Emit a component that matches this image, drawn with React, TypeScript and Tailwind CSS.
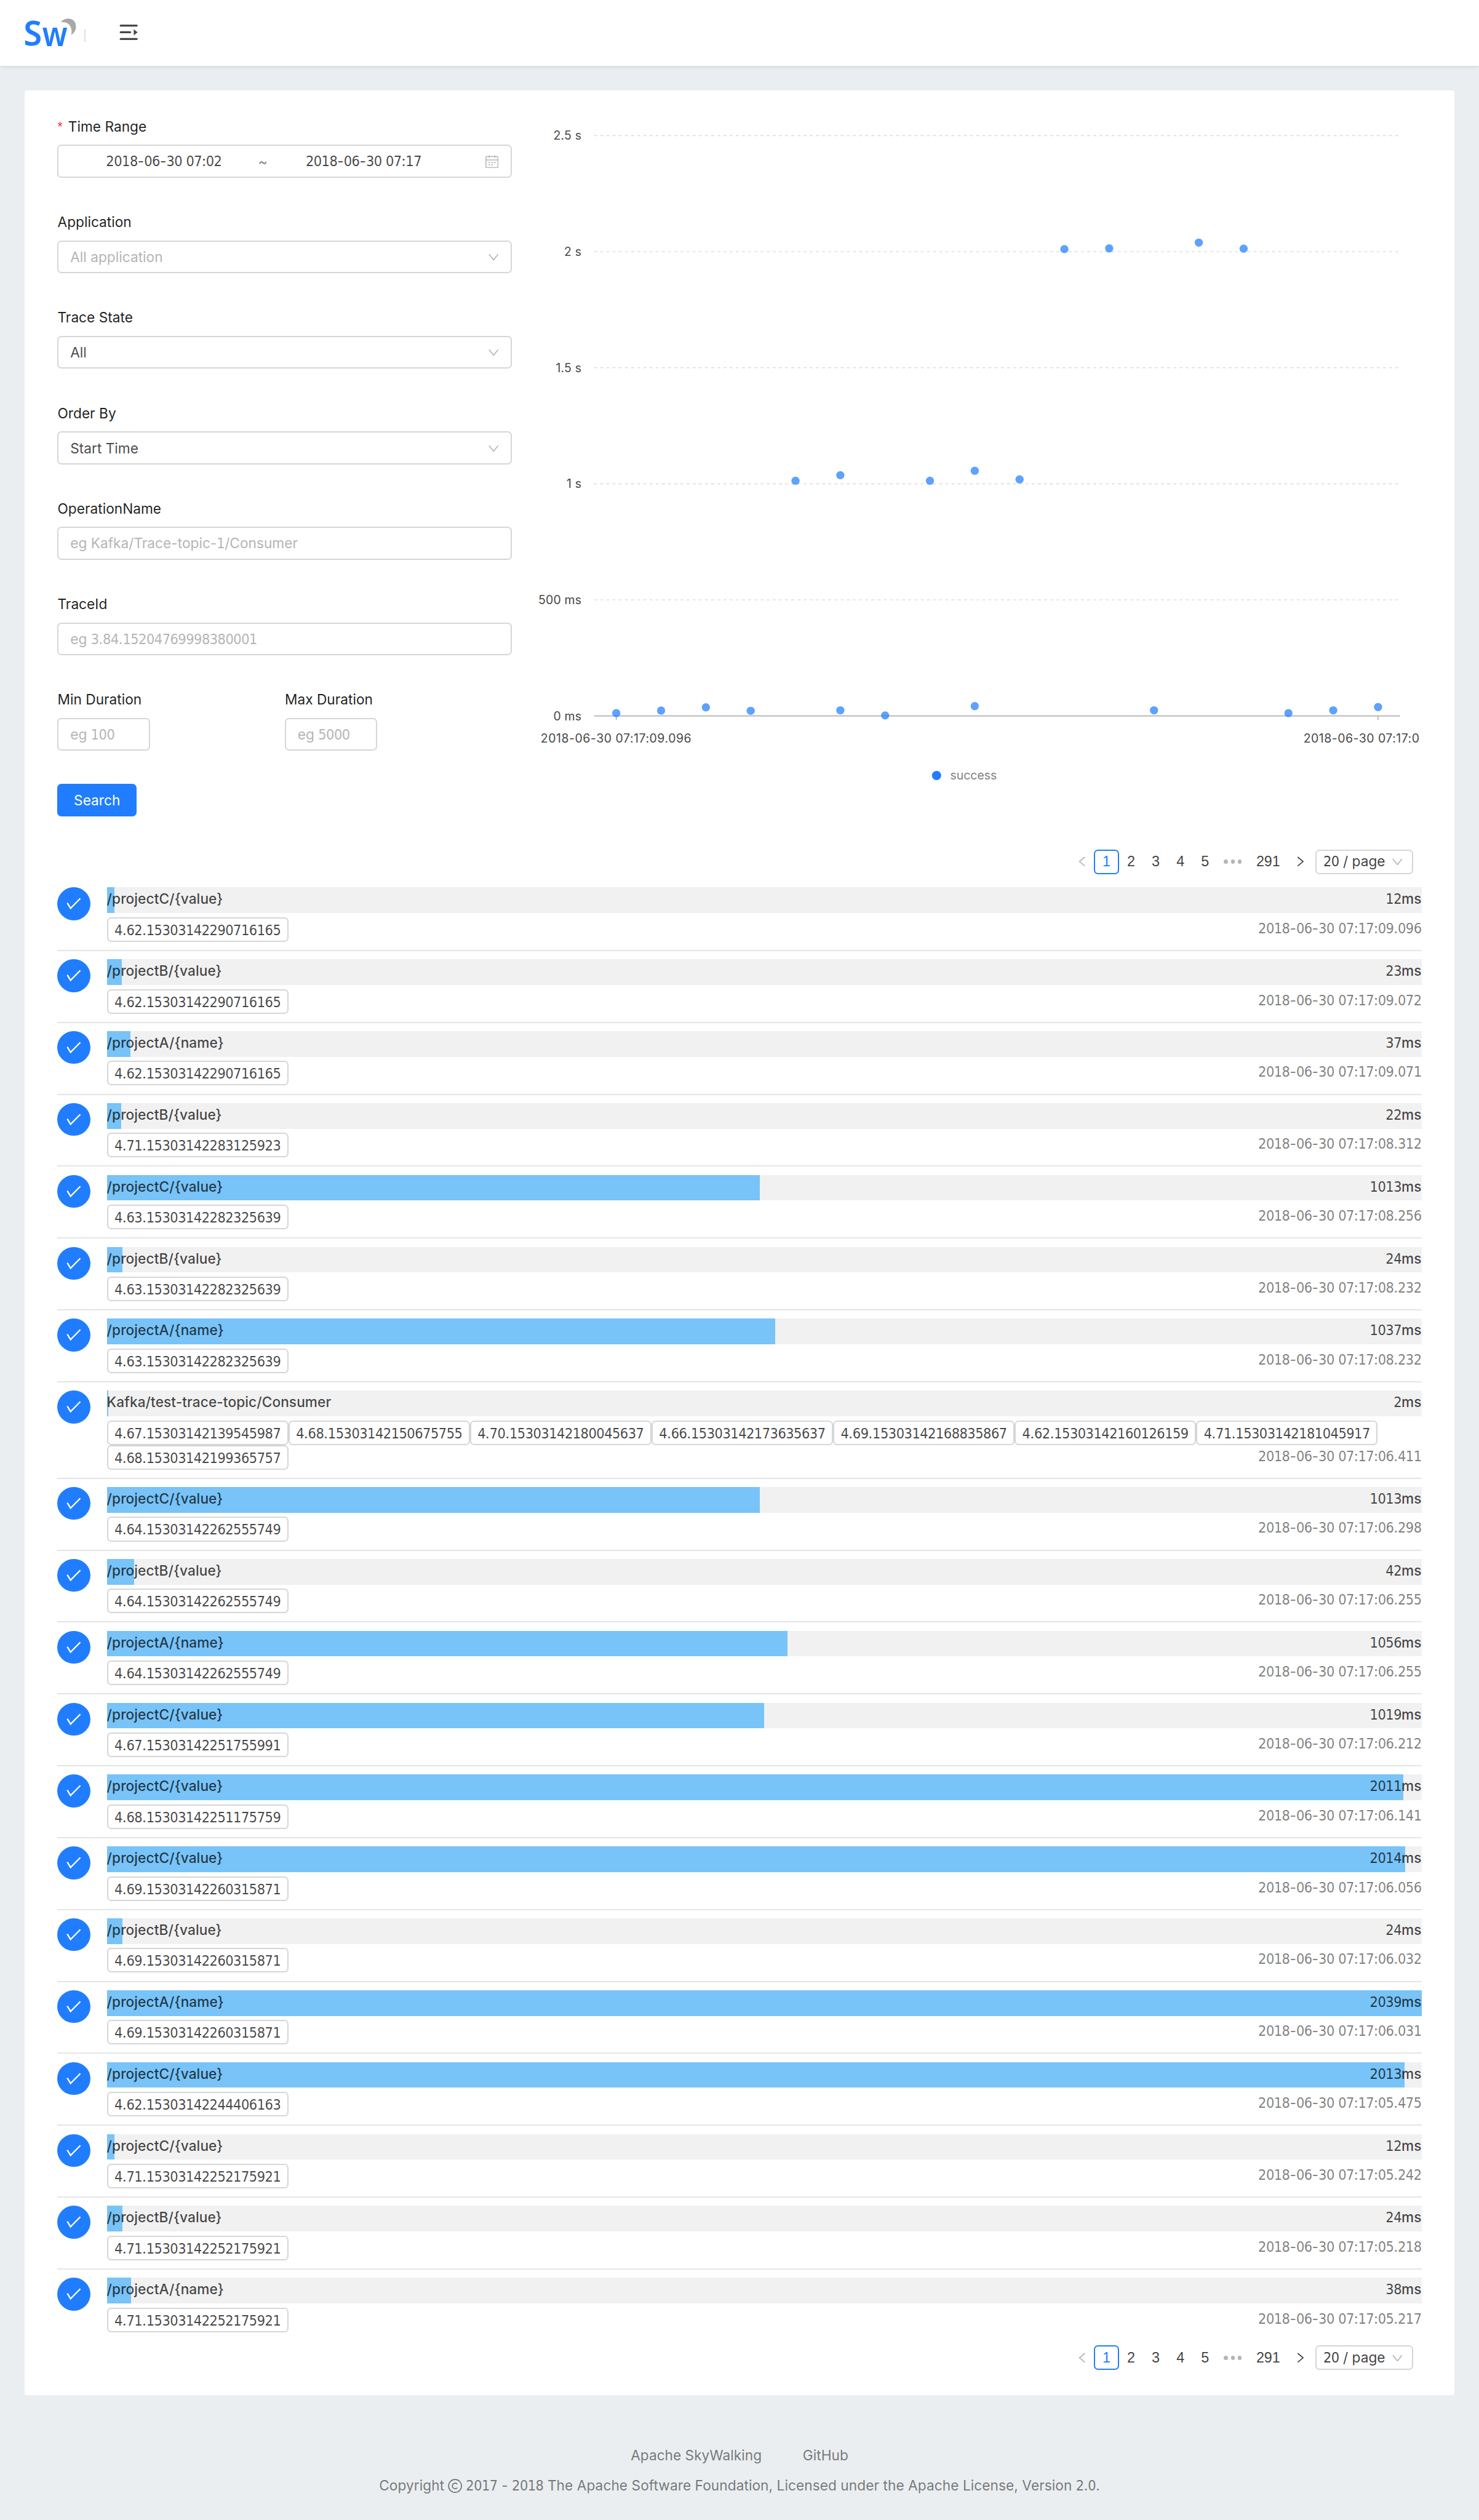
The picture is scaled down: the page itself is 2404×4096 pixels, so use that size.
import { Fragment, type ReactNode } from "react";

type Trace = { name: string; ms: number; ids: string[]; time: string };

const DAY = "2018-06-30 07:17:";

const traces: Trace[] = [
  { name: "/projectC/{value}", ms: 12, ids: ["4.62.15303142290716165"], time: "09.096" },
  { name: "/projectB/{value}", ms: 23, ids: ["4.62.15303142290716165"], time: "09.072" },
  { name: "/projectA/{name}", ms: 37, ids: ["4.62.15303142290716165"], time: "09.071" },
  { name: "/projectB/{value}", ms: 22, ids: ["4.71.15303142283125923"], time: "08.312" },
  { name: "/projectC/{value}", ms: 1013, ids: ["4.63.15303142282325639"], time: "08.256" },
  { name: "/projectB/{value}", ms: 24, ids: ["4.63.15303142282325639"], time: "08.232" },
  { name: "/projectA/{name}", ms: 1037, ids: ["4.63.15303142282325639"], time: "08.232" },
  {
    name: "Kafka/test-trace-topic/Consumer",
    ms: 2,
    ids: [
      "4.67.15303142139545987",
      "4.68.15303142150675755",
      "4.70.15303142180045637",
      "4.66.15303142173635637",
      "4.69.15303142168835867",
      "4.62.15303142160126159",
      "4.71.15303142181045917",
      "4.68.15303142199365757",
    ],
    time: "06.411",
  },
  { name: "/projectC/{value}", ms: 1013, ids: ["4.64.15303142262555749"], time: "06.298" },
  { name: "/projectB/{value}", ms: 42, ids: ["4.64.15303142262555749"], time: "06.255" },
  { name: "/projectA/{name}", ms: 1056, ids: ["4.64.15303142262555749"], time: "06.255" },
  { name: "/projectC/{value}", ms: 1019, ids: ["4.67.15303142251755991"], time: "06.212" },
  { name: "/projectC/{value}", ms: 2011, ids: ["4.68.15303142251175759"], time: "06.141" },
  { name: "/projectC/{value}", ms: 2014, ids: ["4.69.15303142260315871"], time: "06.056" },
  { name: "/projectB/{value}", ms: 24, ids: ["4.69.15303142260315871"], time: "06.032" },
  { name: "/projectA/{name}", ms: 2039, ids: ["4.69.15303142260315871"], time: "06.031" },
  { name: "/projectC/{value}", ms: 2013, ids: ["4.62.15303142244406163"], time: "05.475" },
  { name: "/projectC/{value}", ms: 12, ids: ["4.71.15303142252175921"], time: "05.242" },
  { name: "/projectB/{value}", ms: 24, ids: ["4.71.15303142252175921"], time: "05.218" },
  { name: "/projectA/{name}", ms: 38, ids: ["4.71.15303142252175921"], time: "05.217" },
];

const MAX_MS = 2039;

/** Sets digit runs in the tabular numeral face, everything else in the UI face. */
function Txt({ children }: { children: string }) {
  return (
    <>
      {children.split(/(\d+)/).map((part, i) =>
        i % 2 ? (
          <span
            key={i}
            className="font-['DejaVu_Sans_Condensed','DejaVu_Sans',sans-serif] text-[0.875rem] tracking-[-0.022em]"
          >
            {part}
          </span>
        ) : (
          <Fragment key={i}>{part}</Fragment>
        ),
      )}
    </>
  );
}

function Logo() {
  return (
    <svg viewBox="0 0 100 54" className="h-[1.6875rem] w-[3.125rem] shrink-0 overflow-visible">
      <text x="-2" y="53" textLength="36" lengthAdjust="spacingAndGlyphs" className="fill-[#207dff] font-['Noto_Sans',sans-serif] text-[68px] font-semibold">
        S
      </text>
      <text x="34.5" y="54" textLength="49" lengthAdjust="spacingAndGlyphs" className="fill-[#207dff] font-['Noto_Sans',sans-serif] text-[66px] font-semibold">
        w
      </text>
      <path d="M71 7.4C75-1.500 100-5 100 16.300c0 7.700-4.500 13-9 15.700C93.500 19 88 5.500 71 7.400z" fill="#a8a8a8" />
    </svg>
  );
}

function MenuUnfold() {
  return (
    <svg viewBox="0 0 36 30" className="h-[0.9375rem] w-[1.125rem]" fill="#474747">
      <rect x="0.700" y="0" width="35" height="3.900" rx="1.900" />
      <rect x="0.700" y="13" width="22.300" height="3.900" rx="1.900" />
      <path d="M28 9v12l7.500-6z" />
      <rect x="0.700" y="26.200" width="35" height="3.800" rx="1.900" />
    </svg>
  );
}

function ChevronDown() {
  return (
    <svg viewBox="0 0 20 14" className="h-[0.4375rem] w-[0.625rem] shrink-0" fill="none" stroke="#b0b0b0" strokeWidth="1.900">
      <path d="M1.200 1.500L10 12.500 18.800 1.500" />
    </svg>
  );
}

function Calendar() {
  return (
    <svg viewBox="0 0 26 26" className="h-[0.8125rem] w-[0.8125rem] shrink-0" fill="none" stroke="#b5b5b5" strokeWidth="1.800">
      <rect x="1" y="3" width="23.500" height="21.500" rx="1" />
      <path d="M1 9.500h23.500M7.500 0.500v5M18.500 0.500v5" />
      <path d="M6 14.500h3M11.500 14.500h3M17 14.500h3M6 19h3M11.500 19h3" strokeWidth="2" />
    </svg>
  );
}

function Label({ children, required }: { children: string; required?: boolean }) {
  return (
    <div className="flex h-[1.8125rem] items-start pt-px leading-[1.375rem] text-black/88">
      {required && (
        <span className="w-[0.65rem] font-['Liberation_Sans',sans-serif] text-[0.8rem] text-[#f5304a]">*</span>
      )}
      <span>{children}</span>
    </div>
  );
}

function Box({ children, placeholder, className = "w-full" }: { children: ReactNode; placeholder?: boolean; className?: string }) {
  return (
    <div
      className={`flex h-8 items-center justify-between rounded-[0.25rem] border-2 border-[#d6d6d6] pt-px pr-[0.75rem] pl-[0.7rem] leading-[1.4rem] ${
        placeholder ? "text-[#b5b5b5]" : "text-black/72"
      } ${className}`}
    >
      {children}
    </div>
  );
}

function Field({ label, children, required }: { label: string; children: ReactNode; required?: boolean }) {
  return (
    <div className="h-[5.8125rem]">
      <Label required={required}>{label}</Label>
      {children}
    </div>
  );
}

function SearchForm() {
  return (
    <form className="w-1/3">
      <Field label="Time Range" required>
        <Box>
          <span className="w-[11.4rem] text-center">
            <Txt>2018-06-30 07:02</Txt>
          </span>
          <span className="w-[0.65rem] text-center text-black/55">~</span>
          <span className="w-[11.6rem] text-center">
            <Txt>2018-06-30 07:17</Txt>
          </span>
          <span className="flex flex-1 justify-end">
            <Calendar />
          </span>
        </Box>
      </Field>
      <Field label="Application">
        <Box placeholder>
          <span>All application</span>
          <ChevronDown />
        </Box>
      </Field>
      <Field label="Trace State">
        <Box>
          <span>All</span>
          <ChevronDown />
        </Box>
      </Field>
      <Field label="Order By">
        <Box>
          <span>Start Time</span>
          <ChevronDown />
        </Box>
      </Field>
      <Field label="OperationName">
        <Box placeholder>
          <span>
            <Txt>eg Kafka/Trace-topic-1/Consumer</Txt>
          </span>
        </Box>
      </Field>
      <Field label="TraceId">
        <Box placeholder>
          <span>
            <Txt>eg 3.84.15204769998380001</Txt>
          </span>
        </Box>
      </Field>
      <div className="grid grid-cols-2">
        <Field label="Min Duration">
          <Box placeholder className="w-[5.625rem]">
            <span>
              <Txt>eg 100</Txt>
            </span>
          </Box>
        </Field>
        <Field label="Max Duration">
          <Box placeholder className="w-[5.625rem]">
            <span>
              <Txt>eg 5000</Txt>
            </span>
          </Box>
        </Field>
      </div>
      <button type="button" className="flex h-8 w-[4.8125rem] items-center justify-center rounded-[0.25rem] bg-[#207dff] pt-px text-white">
        Search
      </button>
    </form>
  );
}

const points: [number, number][] = [
  [0, 12], [1, 23], [2, 37], [3, 22], [4, 1013], [5, 24], [5, 1037], [6, 2], [7, 1013], [8, 42], [8, 1056],
  [9, 1019], [10, 2011], [11, 2014], [12, 24], [13, 2039], [14, 2013], [15, 12], [16, 24], [17, 38],
];
const yTicks: [string, number][] = [["2.5 s", 2500], ["2 s", 2000], ["1.5 s", 1500], ["1 s", 1000], ["500 ms", 500], ["0 ms", 0]];
const px = (i: number) => 203.3 + i * 87.26;
const py = (ms: number) => 1170 - (ms * 226) / 500;

function Chart() {
  return (
    <div className="w-2/3">
      <svg viewBox="0 0 1770.67 1342" className="block w-full overflow-hidden font-['Inter',sans-serif] text-[23.3px]">
        {yTicks.map(([label, v]) => (
          <g key={label}>
            <text x="135.5" y={py(v) + 8.5} textAnchor="end" fill="#474747" className="tracking-[0.2px]">
              {label}
            </text>
            {v > 0 && <path d={`M160 ${py(v)}H1727`} stroke="#e0e0e0" strokeWidth="2" strokeDasharray="6 6" />}
          </g>
        ))}
        <path d="M160 1170H1729.500" stroke="#b0b0b0" strokeWidth="2.200" />
        <path d="M203.300 1171v7M1686.700 1171v7" stroke="#b0b0b0" strokeWidth="2" />
        {points.map(([i, ms]) => (
          <circle key={`${i}-${ms}`} cx={px(i)} cy={py(ms)} r="8" fill="#207dff" fillOpacity="0.72" />
        ))}
        <text x="56" y="1222" fill="#474747" className="tracking-[0.66px]">
          2018-06-30 07:17:09.096
        </text>
        <text x="1541.500" y="1222" fill="#474747" className="tracking-[0.600px]">
          2018-06-30 07:17:0
        </text>
        <circle cx="827" cy="1286" r="9" fill="#207dff" />
        <text x="853.500" y="1294" fill="#7f7f7f">
          success
        </text>
      </svg>
    </div>
  );
}

function Arrow({ next }: { next?: boolean }) {
  return (
    <span className="flex w-6 justify-center">
      <svg viewBox="0 0 14 20" className="h-[0.625rem] w-[0.4375rem]" fill="none" strokeWidth="2.100" stroke={next ? "#474747" : "#b5b5b5"}>
        <path d={next ? "M1.500 1.200L12 10 1.500 18.800" : "M12.500 1.200L2 10l10.500 8.800"} />
      </svg>
    </span>
  );
}

function Pager() {
  return (
    <div className="mr-2 flex h-6 items-center justify-end font-['Liberation_Sans',sans-serif] text-sm text-black/75">
      <Arrow />
      <span className="flex h-6 w-6 items-center justify-center rounded-[0.25rem] border-2 border-[#207dff] text-[#207dff]">1</span>
      {["2", "3", "4", "5"].map((n) => (
        <span key={n} className="w-6 text-center">
          {n}
        </span>
      ))}
      <span className="flex w-[1.875rem] justify-center gap-[0.19rem]">
        <i className="size-[0.24rem] rounded-full bg-[#b5b5b5]" />
        <i className="size-[0.24rem] rounded-full bg-[#b5b5b5]" />
        <i className="size-[0.24rem] rounded-full bg-[#b5b5b5]" />
      </span>
      <span className="w-[2.4375rem] text-center">291</span>
      <Arrow next />
      <span className="ml-[0.16rem] flex h-6 w-[5.95rem] items-center justify-between rounded-[0.25rem] border-2 border-[#d6d6d6] pr-[0.58rem] pl-[0.4rem] font-['Inter',sans-serif] text-[0.85rem] leading-[1.3rem]">
        <span>
          <Txt>20 / page</Txt>
        </span>
        <ChevronDown />
      </span>
    </div>
  );
}

function TraceRow({ trace }: { trace: Trace }) {
  return (
    <li className="flex gap-4 border-b-2 border-[#e5e5e5] pt-2 pb-[calc(0.5625rem-2px)] last:border-0 last:pb-2">
      <span className="size-8 shrink-0 rounded-full bg-[#207dff]">
        <svg viewBox="0 0 32 32" className="size-full" fill="none" stroke="#fff" strokeWidth="1.400">
          <path d="M9.800 15.300L13 20.600 22.500 10.900" />
        </svg>
      </span>
      <div className="min-w-0 flex-1">
        <div className="grid h-[1.5625rem] bg-[#f1f1f1]">
          <div
            className="col-start-1 row-start-1 bg-[#78c3f7]"
            style={{ width: `${(trace.ms / MAX_MS) * 100}%` }}
          />
          <div className="col-start-1 row-start-1 flex h-[1.375rem] justify-between pt-px leading-[1.375rem] font-medium tracking-[0.003em]">
            <span>
              <Txt>{trace.name}</Txt>
            </span>
            <span>
              <Txt>{`${trace.ms}ms`}</Txt>
            </span>
          </div>
        </div>
        <div className="grid pt-1">
          <div className="col-start-1 row-start-1 flex flex-wrap">
            {trace.ids.map((id) => (
              <span
                key={id}
                className="h-6 w-[11.048rem] rounded-[0.25rem] border-2 border-[#d6d6d6] text-center leading-[1.4rem]"
              >
                <Txt>{id}</Txt>
              </span>
            ))}
          </div>
          <span className="col-start-1 row-start-1 h-6 self-end justify-self-end leading-[1.375rem] text-black/50">
            <Txt>{DAY + trace.time}</Txt>
          </span>
        </div>
      </div>
    </li>
  );
}

function Footer() {
  return (
    <footer className="flex flex-col items-center pt-12 leading-[1.375rem] text-black/52">
      <div className="flex gap-10">
        <span>Apache SkyWalking</span>
        <span>GitHub</span>
      </div>
      <div className="mt-[0.45rem] flex items-center gap-[0.22rem] tracking-[0.002em]">
        <span>Copyright</span>
        <svg viewBox="0 0 28 28" className="size-[0.875rem]" fill="none" stroke="currentColor" strokeWidth="2">
          <circle cx="14" cy="14" r="12.600" />
          <path d="M18.300 10.600a5.400 5.400 0 1 0 0 6.800" />
        </svg>
        <span>
          <Txt>2017 - 2018 The Apache Software Foundation, Licensed under the Apache License, Version 2.0.</Txt>
        </span>
      </div>
    </footer>
  );
}

export default function App() {
  return (
    <div className="h-[153.35rem] overflow-hidden bg-[#eaeef1] font-['Inter',sans-serif] text-[0.85rem] text-black/72">
      <style>{"html{font-size:26.7111px}"}</style>
      <header className="relative flex h-16 bg-white pt-[1.125rem] pl-6 shadow-[0_0.0625rem_0.25rem_rgba(0,21,41,0.12)]">
        <Logo />
        <span className="mt-[0.625rem] ml-2 h-[0.8125rem] w-[0.0625rem] bg-[#e0e0e0]" />
        <span className="mt-[0.375rem] ml-[2.0625rem]">
          <MenuUnfold />
        </span>
      </header>
      <main className="mx-6 mt-6 h-[140.25rem] rounded-[0.125rem] bg-white px-8 pt-6">
        <div className="flex h-[42.6875rem]">
          <SearchForm />
          <Chart />
        </div>
        <div className="mt-8">
          <Pager />
          <ul className="my-[0.3125rem]">
            {traces.map((t) => (
              <TraceRow key={t.time + t.ms} trace={t} />
            ))}
          </ul>
          <Pager />
        </div>
      </main>
      <Footer />
    </div>
  );
}
